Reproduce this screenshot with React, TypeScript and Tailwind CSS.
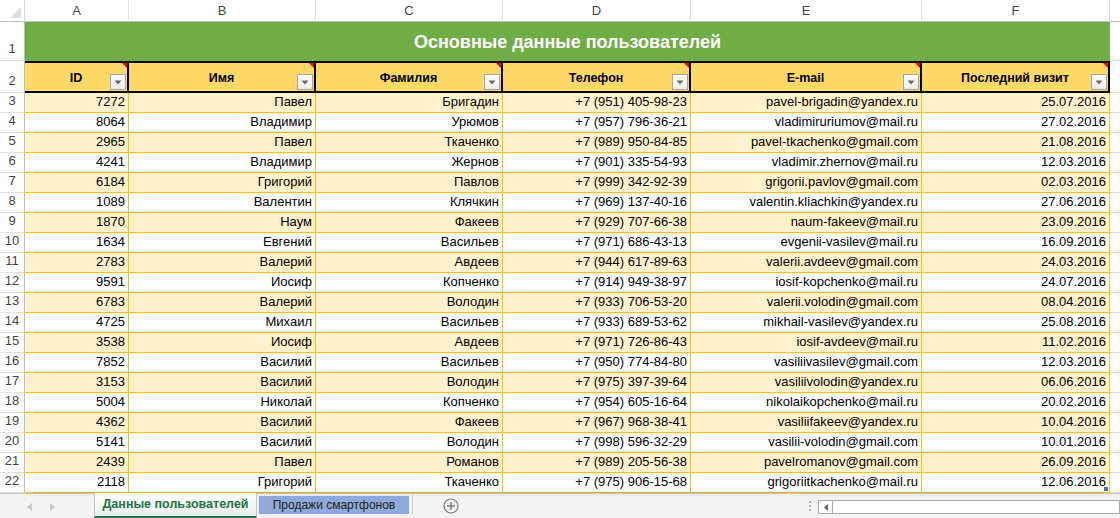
import React from 'react';

type Row = [string, string, string, string, string, string];

const rows: Row[] = [
  ['7272', 'Павел', 'Бригадин', '+7 (951) 405-98-23', 'pavel-brigadin@yandex.ru', '25.07.2016'],
  ['8064', 'Владимир', 'Урюмов', '+7 (957) 796-36-21', 'vladimiruriumov@mail.ru', '27.02.2016'],
  ['2965', 'Павел', 'Ткаченко', '+7 (989) 950-84-85', 'pavel-tkachenko@gmail.com', '21.08.2016'],
  ['4241', 'Владимир', 'Жернов', '+7 (901) 335-54-93', 'vladimir.zhernov@mail.ru', '12.03.2016'],
  ['6184', 'Григорий', 'Павлов', '+7 (999) 342-92-39', 'grigorii.pavlov@gmail.com', '02.03.2016'],
  ['1089', 'Валентин', 'Клячкин', '+7 (969) 137-40-16', 'valentin.kliachkin@yandex.ru', '27.06.2016'],
  ['1870', 'Наум', 'Факеев', '+7 (929) 707-66-38', 'naum-fakeev@mail.ru', '23.09.2016'],
  ['1634', 'Евгений', 'Васильев', '+7 (971) 686-43-13', 'evgenii-vasilev@mail.ru', '16.09.2016'],
  ['2783', 'Валерий', 'Авдеев', '+7 (944) 617-89-63', 'valerii.avdeev@gmail.com', '24.03.2016'],
  ['9591', 'Иосиф', 'Копченко', '+7 (914) 949-38-97', 'iosif-kopchenko@mail.ru', '24.07.2016'],
  ['6783', 'Валерий', 'Володин', '+7 (933) 706-53-20', 'valerii.volodin@gmail.com', '08.04.2016'],
  ['4725', 'Михаил', 'Васильев', '+7 (933) 689-53-62', 'mikhail-vasilev@yandex.ru', '25.08.2016'],
  ['3538', 'Иосиф', 'Авдеев', '+7 (971) 726-86-43', 'iosif-avdeev@mail.ru', '11.02.2016'],
  ['7852', 'Василий', 'Васильев', '+7 (950) 774-84-80', 'vasiliivasilev@gmail.com', '12.03.2016'],
  ['3153', 'Василий', 'Володин', '+7 (975) 397-39-64', 'vasiliivolodin@yandex.ru', '06.06.2016'],
  ['5004', 'Николай', 'Копченко', '+7 (954) 605-16-64', 'nikolaikopchenko@mail.ru', '20.02.2016'],
  ['4362', 'Василий', 'Факеев', '+7 (967) 968-38-41', 'vasiliifakeev@yandex.ru', '10.04.2016'],
  ['5141', 'Василий', 'Володин', '+7 (998) 596-32-29', 'vasilii-volodin@gmail.com', '10.01.2016'],
  ['2439', 'Павел', 'Романов', '+7 (989) 205-56-38', 'pavelromanov@gmail.com', '26.09.2016'],
  ['2118', 'Григорий', 'Ткаченко', '+7 (975) 906-15-68', 'grigoriitkachenko@mail.ru', '12.06.2016'],
];

const letters = ['A', 'B', 'C', 'D', 'E', 'F'];
const headers = ['ID', 'Имя', 'Фамилия', 'Телефон', 'E-mail', 'Последний визит'];

function FilterButton() {
  return (
    <div className="absolute bottom-[1px] right-[1px] flex h-[16px] w-[16px] items-center justify-center border border-[#a6a6a6] bg-gradient-to-b from-white to-[#ececec]">
      <svg width="8" height="5" viewBox="0 0 8 5">
        <path d="M0.5 0.5 L7.5 0.5 L4 4.5 Z" fill="#6a6a6a" />
      </svg>
    </div>
  );
}

function HeaderCell({ label }: { label: string }) {
  return (
    <div className="relative flex items-center justify-center border-t-2 border-b-2 border-r-2 border-black bg-[#ffd966] pt-[2px] text-[12.5px] font-bold text-black">
      {label}
      <div className="absolute right-0 top-0 h-0 w-0 border-l-[5px] border-t-[5px] border-l-transparent border-t-[#ff0000]" />
      <FilterButton />
    </div>
  );
}

function RowNum({ n }: { n: number }) {
  return (
    <div className="flex items-end justify-center border-b border-r border-b-[#e1e1e1] border-r-[#bdbdbd] bg-white pb-[2px] text-[13px] text-[#444]">
      {n}
    </div>
  );
}

export default function App() {
  return (
    <div
      className="flex h-[518px] w-[1120px] flex-col overflow-hidden bg-white"
      style={{ fontFamily: '"Liberation Sans", Arial, sans-serif' }}
    >
      <div className="grid grid-cols-[25px_104px_187px_187px_188px_231px_188px_1fr] grid-rows-[22px_39px_32px_repeat(20,20px)]">
        {/* column letters */}
        <div className="relative border-b border-r border-b-[#bdbdbd] border-r-[#d4d4d4] bg-white">
          <div className="absolute bottom-[3px] right-[3px] h-0 w-0 border-b-[11px] border-l-[11px] border-b-[#dfdfdf] border-l-transparent" />
        </div>
        {letters.map((l) => (
          <div
            key={l}
            className="flex items-center justify-center border-b border-r border-b-[#bdbdbd] border-r-[#e1e1e1] bg-white text-[13px] text-[#444]"
          >
            {l}
          </div>
        ))}
        <div className="border-b border-b-[#bdbdbd] bg-white" />

        {/* row 1: title */}
        <RowNum n={1} />
        <div className="col-span-6 flex items-center justify-center bg-[#70ad47] pt-[2px] text-[18px] font-bold text-white">
          Основные данные пользователей
        </div>
        <div className="border-b border-b-[#e1e1e1]" />

        {/* row 2: table header */}
        <RowNum n={2} />
        {headers.map((h) => (
          <HeaderCell key={h} label={h} />
        ))}
        <div className="border-b border-b-[#e1e1e1]" />

        {/* data rows */}
        {rows.map((r, i) => (
          <React.Fragment key={i}>
            <RowNum n={i + 3} />
            {r.map((v, j) => (
              <div
                key={j}
                className={
                  'relative flex items-end justify-end border-b border-r border-[#ffc000] pb-[1px] pr-[3px] text-[13px] text-black ' +
                  (i % 2 === 0 ? 'bg-[#fff2cc]' : 'bg-white')
                }
              >
                {v}
                {i === rows.length - 1 && j === 5 && (
                  <div className="absolute bottom-[1px] right-[1px] h-[4px] w-[4px] bg-[#4472c4]" />
                )}
              </div>
            ))}
            <div className="border-b border-b-[#e1e1e1]" />
          </React.Fragment>
        ))}
      </div>

      {/* sheet tabs bar */}
      <div className="flex flex-1 items-stretch border-t border-[#c6c6c6] bg-[#f3f3f3]">
        <div className="flex w-[94px] items-center gap-[18px] pl-[27px]">
          <svg width="5" height="8" viewBox="0 0 5 8">
            <path d="M5 0 L0 4 L5 8 Z" fill="#c8c8c8" />
          </svg>
          <svg width="5" height="8" viewBox="0 0 5 8">
            <path d="M0 0 L5 4 L0 8 Z" fill="#c8c8c8" />
          </svg>
        </div>
        <div className="-mt-px flex w-[163px] items-center justify-center border-b-[3px] border-l border-r border-b-[#217346] border-l-[#c6c6c6] border-r-[#c6c6c6] bg-gradient-to-b from-white to-[#e6f0e6] text-[12.5px] font-bold text-[#217346]">
          Данные пользователей
        </div>
        <div className="ml-[2px] mb-[5px] mt-[2px] flex w-[150px] items-center justify-center bg-[#8ea9db] text-[12px] text-[#222]">
          Продажи смартфонов
        </div>
        <div className="ml-[3px] mb-[5px] w-px bg-[#c6c6c6]" />
        <div className="flex w-[76px] items-center justify-center pb-[2px]">
          <svg width="16" height="16" viewBox="0 0 16 16">
            <circle cx="8" cy="8" r="7" fill="none" stroke="#7a7a7a" strokeWidth="1.2" />
            <path d="M8 4 V12 M4 8 H12" stroke="#7a7a7a" strokeWidth="1.4" />
          </svg>
        </div>
        <div className="flex-1" />
        <div className="flex w-[16px] flex-col items-center justify-center gap-[2px] pb-[2px]">
          <div className="h-[2px] w-[2px] bg-[#b0b0b0]" />
          <div className="h-[2px] w-[2px] bg-[#b0b0b0]" />
          <div className="h-[2px] w-[2px] bg-[#b0b0b0]" />
        </div>
        <div className="mb-[5px] mt-[6px] flex w-[302px] border border-[#ababab] bg-white">
          <div className="flex w-[14px] items-center justify-center border-r border-[#ababab]">
            <svg width="4" height="7" viewBox="0 0 4 7">
              <path d="M4 0 L0 3.5 L4 7 Z" fill="#606060" />
            </svg>
          </div>
        </div>
      </div>
    </div>
  );
}
